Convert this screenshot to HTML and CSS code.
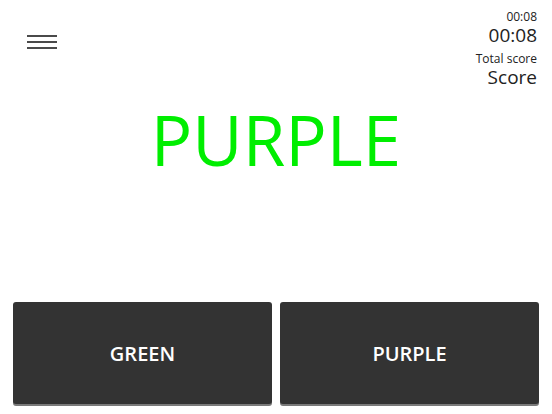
FILE: index.html
```html
<!DOCTYPE html>
<html>
<head>
    <title>Color Game</title>
    <link rel="stylesheet" href="styles.css">
</head>
<body>

<div class="game">
    <div class="header">
        <button class="menu-toggle" aria-label="Menu">
            <span></span>
            <span></span>
            <span></span>
        </button>
        <div class="stats">
            <div class="stat">
                <div class="stat-label">00:08</div>
                <div class="stat-value">00:08</div>
            </div>
            <div class="stat">
                <div class="stat-label">Total score</div>
                <div class="stat-value">Score</div>
            </div>
        </div>
    </div>

    <div class="word-area">
        <div class="word">PURPLE</div>
    </div>

    <div class="answers">
        <button class="answer">GREEN</button>
        <button class="answer">PURPLE</button>
    </div>
</div>

</body>
</html>
```

FILE: styles.css
```css
html, body {
    margin: 0;
    padding: 0;
    background-color: #fff;
}
body {
    font-family: "Open Sans", "Liberation Sans", sans-serif;
    color: #222;
}
.game {
    height: 414px;
    display: flex;
    flex-direction: column;
}
.header {
    display: flex;
    justify-content: space-between;
    align-items: flex-start;
    height: 87px;
    padding: 8px 15px 0 27px;
    box-sizing: border-box;
}
.menu-toggle {
    display: flex;
    flex-direction: column;
    gap: 4px;
    width: 30px;
    padding: 0;
    margin-top: 27px;
    border: none;
    background: none;
    cursor: pointer;
}
.menu-toggle span {
    display: block;
    height: 2px;
    background-color: #4a4a4a;
}
.stats {
    text-align: right;
    display: flex;
    flex-direction: column;
    gap: 4px;
}
.stat-label {
    font-size: 12px;
    line-height: 17px;
}
.stat-value {
    font-size: 19px;
    line-height: 21px;
}
.word-area {
    flex: 1;
    padding-top: 5px;
    text-align: center;
}
.word {
    font-size: 69px;
    line-height: 94px;
    color: #00ee00;
}
.answers {
    display: flex;
    gap: 8px;
    padding: 0 13px 10px 13px;
}
.answer {
    flex: 1;
    height: 102px;
    background-color: #333;
    color: #fff;
    border: none;
    border-radius: 3px;
    box-shadow: 0 2px 0 #7a7a7a;
    font-family: "Open Sans", "Liberation Sans", sans-serif;
    font-size: 20px;
    font-weight: 600;
    cursor: pointer;
}
```
